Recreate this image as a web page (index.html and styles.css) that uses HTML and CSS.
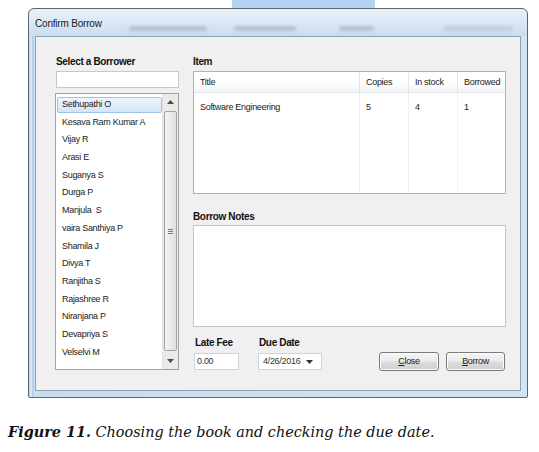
FILE: index.html
```html
<!DOCTYPE html>
<html>
<head>
<meta charset="utf-8">
<link rel="stylesheet" href="styles.css">
</head>
<body>
<div class="page">
  <div class="topstrip"><div class="toprect"></div></div>
  <div class="window">
    <div class="titlebar">
      <span class="title">Confirm Borrow</span>
      <span class="ghost g1"></span>
      <span class="ghost g2"></span>
      <span class="ghost g3"></span>
      <span class="ghost g4"></span>
    </div>
    <div class="client">
      <div class="leftcol">
        <div class="label">Select a Borrower</div>
        <div class="textbox"></div>
        <div class="listbox">
          <div class="items">
            <div class="item selected">Sethupathi O</div>
            <div class="item">Kesava Ram Kumar A</div>
            <div class="item">Vijay R</div>
            <div class="item">Arasi E</div>
            <div class="item">Suganya S</div>
            <div class="item">Durga P</div>
            <div class="item">Manjula&nbsp; S</div>
            <div class="item">vaira Santhiya P</div>
            <div class="item">Shamila J</div>
            <div class="item">Divya T</div>
            <div class="item">Ranjitha S</div>
            <div class="item">Rajashree R</div>
            <div class="item">Niranjana P</div>
            <div class="item">Devapriya S</div>
            <div class="item">Velselvi M</div>
          </div>
          <div class="scrollbar">
            <div class="sb-btn"><svg width="7" height="4" viewBox="0 0 7 4"><path d="M0 4 L3.5 0 L7 4 Z" fill="#4d4d4d"/></svg></div>
            <div class="sb-thumb"><div class="grip"></div></div>
            <div class="sb-btn"><svg width="7" height="4" viewBox="0 0 7 4"><path d="M0 0 L3.5 4 L7 0 Z" fill="#4d4d4d"/></svg></div>
          </div>
        </div>
      </div>
      <div class="rightcol">
        <div class="label">Item</div>
        <div class="listview">
          <div class="lv-row lv-head">
            <div class="c c1">Title</div>
            <div class="c c2">Copies</div>
            <div class="c c3">In stock</div>
            <div class="c c4">Borrowed</div>
          </div>
          <div class="lv-row lv-body">
            <div class="c c1">Software Engineering</div>
            <div class="c c2">5</div>
            <div class="c c3">4</div>
            <div class="c c4">1</div>
          </div>
        </div>
        <div class="label notes-label">Borrow Notes</div>
        <div class="notes"></div>
        <div class="bottomrow">
          <div class="field fee">
            <div class="label">Late Fee</div>
            <div class="input fee-input">0.00</div>
          </div>
          <div class="field due">
            <div class="label">Due Date</div>
            <div class="input date-input"><span>4/26/2016</span><svg width="7" height="4" viewBox="0 0 7 4"><path d="M0 0 L3.5 4 L7 0 Z" fill="#333"/></svg></div>
          </div>
          <div class="buttons">
            <div class="btn"><u>C</u>lose</div>
            <div class="btn"><u>B</u>orrow</div>
          </div>
        </div>
      </div>
    </div>
  </div>
  <p class="caption"><b>Figure 11.</b> Choosing the book and checking the due date.</p>
</div>
</body>
</html>
```
FILE: styles.css
```css
html, body {
  margin: 0;
  padding: 0;
  background: #ffffff;
}
.page {
  width: 539px;
  height: 452px;
  font-family: "Liberation Sans", Arial, sans-serif;
}
.topstrip {
  height: 8px;
  display: flex;
}
.toprect {
  margin-left: 232px;
  width: 143px;
  height: 8px;
  background: #b6d2f2;
}
.window {
  margin-left: 28px;
  width: 498px;
  height: 388px;
  border: 1px solid #5f646b;
  border-radius: 6px 6px 2px 2px;
  background: linear-gradient(to right, #b8d0ea 0px, #e4eef8 2px, #a9c8ea 4px, #d7e5f3 6px, #c9dbee 8px, #d4e3f2 100%);
  display: flex;
  flex-direction: column;
}
.titlebar {
  height: 27px;
  display: flex;
  align-items: flex-start;
  background: linear-gradient(to bottom, #e9f1fa 0%, #dbe8f5 45%, #c9dcef 100%);
  border-radius: 6px 6px 0 0;
}
.title {
  font-family: "Liberation Sans", Arial, sans-serif;
  font-size: 10px;
  color: #1a1a1a;
  margin-left: 6px;
  margin-top: 9px;
  letter-spacing: -0.2px;
  white-space: nowrap;
}
.ghost {
  height: 5px;
  margin-top: 17px;
  background: #a9b6c4;
  border-radius: 3px;
  filter: blur(1.6px);
  opacity: 0.75;
}
.g1 { margin-left: 27px; width: 78px; }
.g2 { margin-left: 27px; width: 62px; }
.g3 { margin-left: 43px; width: 35px; }
.g4 { margin-left: 69px; width: 70px; opacity: 0.45; }
.client {
  flex: 1;
  margin: 0 6px 6px 6px;
  border: 1px solid #8fa2b6;
  background: #f0f0f0;
  padding: 19px 14px 0 19px;
  display: grid;
  grid-template-columns: 124px 313px;
  column-gap: 14px;
  align-items: start;
}
.label {
  font-size: 10px;
  font-weight: bold;
  line-height: 11px;
  height: 11px;
  color: #111;
  white-space: nowrap;
  letter-spacing: -0.35px;
}
.leftcol {
  display: flex;
  flex-direction: column;
}
.leftcol .label { margin-left: 1px; }
.textbox {
  margin-top: 4px;
  margin-left: 1px;
  height: 15px;
  border: 1px solid #c5c8cd;
  background: #fff;
}
.listbox {
  margin-top: 5px;
  height: 275px;
  border: 1px solid #9ea3aa;
  background: #fff;
  display: flex;
}
.items {
  flex: 1;
  padding: 3px 0 0 1px;
  display: flex;
  flex-direction: column;
  gap: 2px;
}
.item {
  height: 15.7px;
  line-height: 15.7px;
  font-size: 9px;
  color: #222;
  padding-left: 5px;
  white-space: nowrap;
  letter-spacing: -0.3px;
  box-sizing: border-box;
}
.item.selected {
  background: linear-gradient(to bottom, #eef5fd, #d3e5f9);
  border: 1px solid #9fc1ea;
  border-radius: 2px;
  line-height: 13.7px;
  padding-left: 4px;
}
.scrollbar {
  width: 15px;
  background: #eaeaea;
  border-left: 1px solid #e2e2e2;
  display: flex;
  flex-direction: column;
}
.sb-btn {
  height: 16px;
  display: flex;
  align-items: center;
  justify-content: center;
}
.sb-thumb {
  flex: 1;
  margin: 1px 1px 2px 1px;
  border: 1px solid #a4a4a4;
  border-radius: 2px;
  background: linear-gradient(to right, #f4f4f4, #e0e0e0);
  display: flex;
  align-items: center;
  justify-content: center;
}
.grip {
  width: 5px;
  height: 5px;
  background: repeating-linear-gradient(to bottom, #7a7a7a 0 1px, transparent 1px 2px);
}
.rightcol {
  display: flex;
  flex-direction: column;
}
.listview {
  margin-top: 4px;
  height: 121px;
  border: 1px solid #aeb3b9;
  background: #fff;
  display: flex;
  flex-direction: column;
}
.lv-row {
  display: grid;
  grid-template-columns: 166px 49px 49px 1fr;
}
.lv-head {
  height: 20px;
  background: linear-gradient(to bottom, #ffffff 0%, #ffffff 50%, #f3f4f6 100%);
  border-bottom: 1px solid #e4e6ea;
}
.lv-head .c {
  line-height: 20px;
  border-right: 1px solid #e3e5e9;
}
.lv-head .c4 { border-right: none; }
.lv-body {
  flex: 1;
}
.lv-body .c {
  padding-top: 9px;
  border-right: 1px solid #f1f1f3;
}
.lv-body .c4 { border-right: none; }
.c {
  font-size: 9px;
  color: #222;
  padding-left: 6px;
  white-space: nowrap;
  letter-spacing: -0.3px;
}
.c1 { padding-left: 6px; }
.notes-label {
  margin-top: 17px;
}
.notes {
  margin-top: 3px;
  height: 100px;
  border: 1px solid #c2c6cc;
  background: #fff;
}
.bottomrow {
  margin-top: 10px;
  display: flex;
  align-items: flex-end;
}
.field {
  display: flex;
  flex-direction: column;
}
.field .label { margin-left: 1px; }
.fee { margin-left: 1px; }
.due { margin-left: 19px; }
.input {
  margin-top: 5px;
  height: 15px;
  border: 1px solid #d0d3d8;
  background: #fff;
  font-size: 9px;
  line-height: 15px;
  color: #333;
  letter-spacing: -0.3px;
  white-space: nowrap;
}
.fee-input {
  width: 41px;
  padding-left: 2px;
}
.date-input {
  width: 58px;
  padding-left: 4px;
  display: flex;
  align-items: center;
  gap: 6px;
}
.buttons {
  margin-left: auto;
  margin-right: 1px;
  display: flex;
  gap: 7px;
  margin-bottom: -1px;
}
.btn {
  height: 17px;
  border: 1px solid #7b7b7b;
  border-radius: 3px;
  background: linear-gradient(to bottom, #f5f5f5 0%, #ebebeb 48%, #dddddd 52%, #d0d0d0 100%);
  box-shadow: inset 0 0 0 1px #fbfbfb;
  font-size: 9px;
  line-height: 17px;
  text-align: center;
  color: #222;
  letter-spacing: -0.3px;
}
.btn:first-child { width: 58px; }
.btn:last-child { width: 57px; }
.caption {
  margin: 25px 0 0 8px;
  font-family: "DejaVu Serif", "Liberation Serif", serif;
  font-style: italic;
  font-size: 14.4px;
  line-height: 18px;
  color: #111;
  white-space: nowrap;
}
.caption b { font-weight: bold; }
```
